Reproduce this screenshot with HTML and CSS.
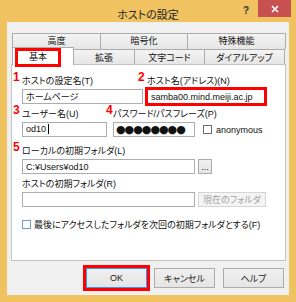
FILE: index.html
```html
<!DOCTYPE html>
<html lang="ja">
  <head>
    <meta charset="UTF-8" />
    <title>ホストの設定</title>
    <link rel="stylesheet" href="styles.css">
  </head>
  <body>
    <div class="window">
      <div class="titlebar">
        <span></span>
        <span class="title">ホストの設定</span>
        <div class="caption-btns">
          <span class="help-btn">?</span>
          <span class="close-btn">
            <svg width="8" height="8" viewBox="0 0 8 8">
              <path d="M1 1 L7 7 M7 1 L1 7" stroke="#fff" stroke-width="1.6" />
            </svg>
          </span>
        </div>
      </div>

      <div class="client">
        <div class="tabrow back">
          <div class="tab t-kodo">高度</div>
          <div class="tab t-angou">暗号化</div>
          <div class="tab t-tokushu">特殊機能</div>
        </div>
        <div class="tabrow front">
          <div class="tab active"><span class="mark">基本</span></div>
          <div class="tab t-kakuchou">拡張</div>
          <div class="tab t-moji">文字コード</div>
          <div class="tab t-dial">ダイアルアップ</div>
        </div>

        <div class="panel">
          <div class="row row1">
            <div class="field f-name">
              <span class="num">1</span>
              <label>ホストの設定名(T)</label>
              <input class="textbox" type="text" value="ホームページ" />
            </div>
            <div class="field f-host">
              <span class="num">2</span>
              <label>ホスト名(アドレス)(N)</label>
              <input class="textbox marked" type="text" value="samba00.mind.meiji.ac.jp" />
            </div>
          </div>

          <div class="row row2">
            <div class="field f-user">
              <span class="num">3</span>
              <label>ユーザー名(U)</label>
              <div class="textbox">od10<span class="caret"></span></div>
            </div>
            <div class="field f-pass">
              <span class="num n4">4</span>
              <label>パスワード/パスフレーズ(P)</label>
              <div class="textbox pw">●●●●●●●●</div>
            </div>
            <div class="anon">
              <span class="checkbox"></span>
              <span>anonymous</span>
            </div>
          </div>

          <div class="row row3">
            <div class="field">
              <span class="num">5</span>
              <label>ローカルの初期フォルダ(L)</label>
              <div class="inputline">
                <input class="textbox wide" type="text" value="C:¥Users¥od10" />
                <button class="sbtn dots">...</button>
              </div>
            </div>
          </div>

          <div class="row row4">
            <div class="field">
              <label>ホストの初期フォルダ(R)</label>
              <div class="inputline">
                <input class="textbox wide" type="text" value="" />
                <button class="sbtn current" disabled>現在のフォルダ</button>
              </div>
            </div>
          </div>

          <div class="check-row">
            <span class="checkbox blue"></span>
            <span>最後にアクセスしたフォルダを次回の初期フォルダとする(F)</span>
          </div>
        </div>

        <div class="buttons">
          <button class="btn ok">OK</button>
          <button class="btn">キャンセル</button>
          <button class="btn help">ヘルプ</button>
        </div>
      </div>
    </div>
  </body>
</html>
```

FILE: styles.css
```css
* {
  box-sizing: border-box;
}
body {
  margin: 0;
  width: 296px;
  height: 302px;
  overflow: hidden;
  background: #f0c360;
  font-family: "Liberation Sans", "Noto Sans CJK JP", sans-serif;
  font-size: 9px;
  font-feature-settings: "palt";
  color: #111;
}
.window {
  height: 302px;
  display: flex;
  flex-direction: column;
}

/* title bar */
.titlebar {
  height: 22px;
  display: grid;
  grid-template-columns: 1fr auto 1fr;
}
.title {
  font-family: "Noto Sans CJK JP", sans-serif;
  font-size: 11px;
  line-height: 16px;
  padding-top: 6px;
  color: #222;
}
.caption-btns {
  display: flex;
  justify-content: flex-end;
  align-items: flex-start;
  padding-right: 5px;
}
.help-btn {
  width: 24px;
  height: 17px;
  text-align: center;
  font-weight: bold;
  font-size: 10px;
  line-height: 21px;
  color: #333;
}
.close-btn {
  width: 33px;
  height: 17px;
  background: #c75050;
  display: flex;
  align-items: center;
  justify-content: center;
}

/* client area */
.client {
  flex: 1;
  margin: 0 7px 7px;
  background: #f0f0f0;
  padding: 11px 3px 0 4px;
}
.tabrow {
  display: flex;
  padding-left: 1px;
}
.tab {
  border: 1px solid #acacac;
  border-bottom: none;
  background: linear-gradient(#f4f4f4, #e6e6e6);
  text-align: center;
  margin-left: -1px;
  white-space: nowrap;
}
.tab:first-child {
  margin-left: 0;
}
.back .tab {
  height: 16px;
  line-height: 15px;
}
.front .tab {
  height: 15px;
  line-height: 14px;
  padding-top: 1px;
}
.t-kodo { width: 89px; }
.t-angou { width: 88px; }
.t-tokushu { width: 99px; }
.t-kakuchou { width: 62px; }
.t-moji { width: 71px; }
.t-dial { width: 81px; }
.front .tab.active {
  width: 62px;
  height: 18px;
  margin-top: -2px;
  margin-bottom: -1px;
  padding: 2px 0 0 5px;
  background: #fff;
  text-align: left;
  position: relative;
  z-index: 1;
}
.mark {
  display: inline-block;
  width: 40px;
  height: 13px;
  line-height: 13px;
  text-align: center;
  outline: 3px solid #f00;
}

/* panel */
.panel {
  height: 197px;
  background: #fff;
  border: 1px solid #c4c4c4;
  padding: 10px 0 0 10px;
}
.row {
  display: flex;
}
.row1 { gap: 4px; }
.row2 { margin-top: 4px; gap: 6px; }
.row3 { margin-top: 8px; }
.row4 { margin-top: 4px; }
.field {
  position: relative;
  display: flex;
  flex-direction: column;
}
.field label {
  height: 12px;
  line-height: 12px;
  margin-bottom: 2px;
  white-space: nowrap;
}
.num {
  position: absolute;
  left: -9px;
  top: -4px;
  font-family: "Liberation Sans", sans-serif;
  font-weight: bold;
  font-size: 12px;
  line-height: 12px;
  color: #f00;
}
.num.n4 {
  left: -7px;
}
.textbox {
  height: 15px;
  border: 1px solid #abadb3;
  padding: 0 3px;
  font: inherit;
  line-height: 13px;
  background: #fff;
  color: #111;
  outline: none;
}
.f-name { width: 121px; }
.f-host { width: 118px; }
.f-user { width: 85px; }
.f-pass { width: 82px; }
.textbox.marked {
  border: 1px solid #f00;
  outline: 2px solid #f00;
}
.caret {
  display: inline-block;
  width: 1px;
  height: 10px;
  background: #000;
  margin-left: 2px;
  vertical-align: -2px;
}
.pw {
  font-family: "DejaVu Sans", sans-serif;
  font-size: 11px;
  letter-spacing: -1px;
  padding-left: 2px;
}
.anon {
  align-self: flex-end;
  height: 15px;
  display: flex;
  align-items: center;
  margin-left: 2px;
}
.checkbox {
  width: 9px;
  height: 9px;
  border: 1px solid #707070;
  background: #fff;
  margin-right: 4px;
}
.checkbox.blue {
  border-color: #6d9ed6;
  margin-right: 3px;
}
.inputline {
  display: flex;
}
.textbox.wide {
  width: 173px;
}
.sbtn {
  height: 15px;
  margin-left: 3px;
  border: 1px solid #acacac;
  background: linear-gradient(#f0f0f0, #e5e5e5);
  font: inherit;
  padding: 0;
  color: #222;
}
.sbtn.dots {
  width: 14px;
  line-height: 8px;
}
.sbtn.current {
  width: 68px;
  color: #a3a3a3;
  border-color: #d5d5d5;
  background: #f4f4f4;
}
.check-row {
  margin-top: 11px;
  height: 12px;
  display: flex;
  align-items: center;
  white-space: nowrap;
}

/* bottom buttons */
.buttons {
  display: flex;
  justify-content: flex-end;
  margin-top: 7px;
  padding-right: 2px;
}
.btn {
  width: 61px;
  height: 20px;
  border: 1px solid #acacac;
  background: linear-gradient(#f0f0f0, #e5e5e5);
  font: inherit;
  color: #222;
  padding: 0;
  margin-left: 7px;
}
.btn.help {
  margin-left: 8px;
}
.btn.ok {
  border-color: #3399ff;
  outline: 3px solid #f00;
  outline-offset: 0;
}
```
